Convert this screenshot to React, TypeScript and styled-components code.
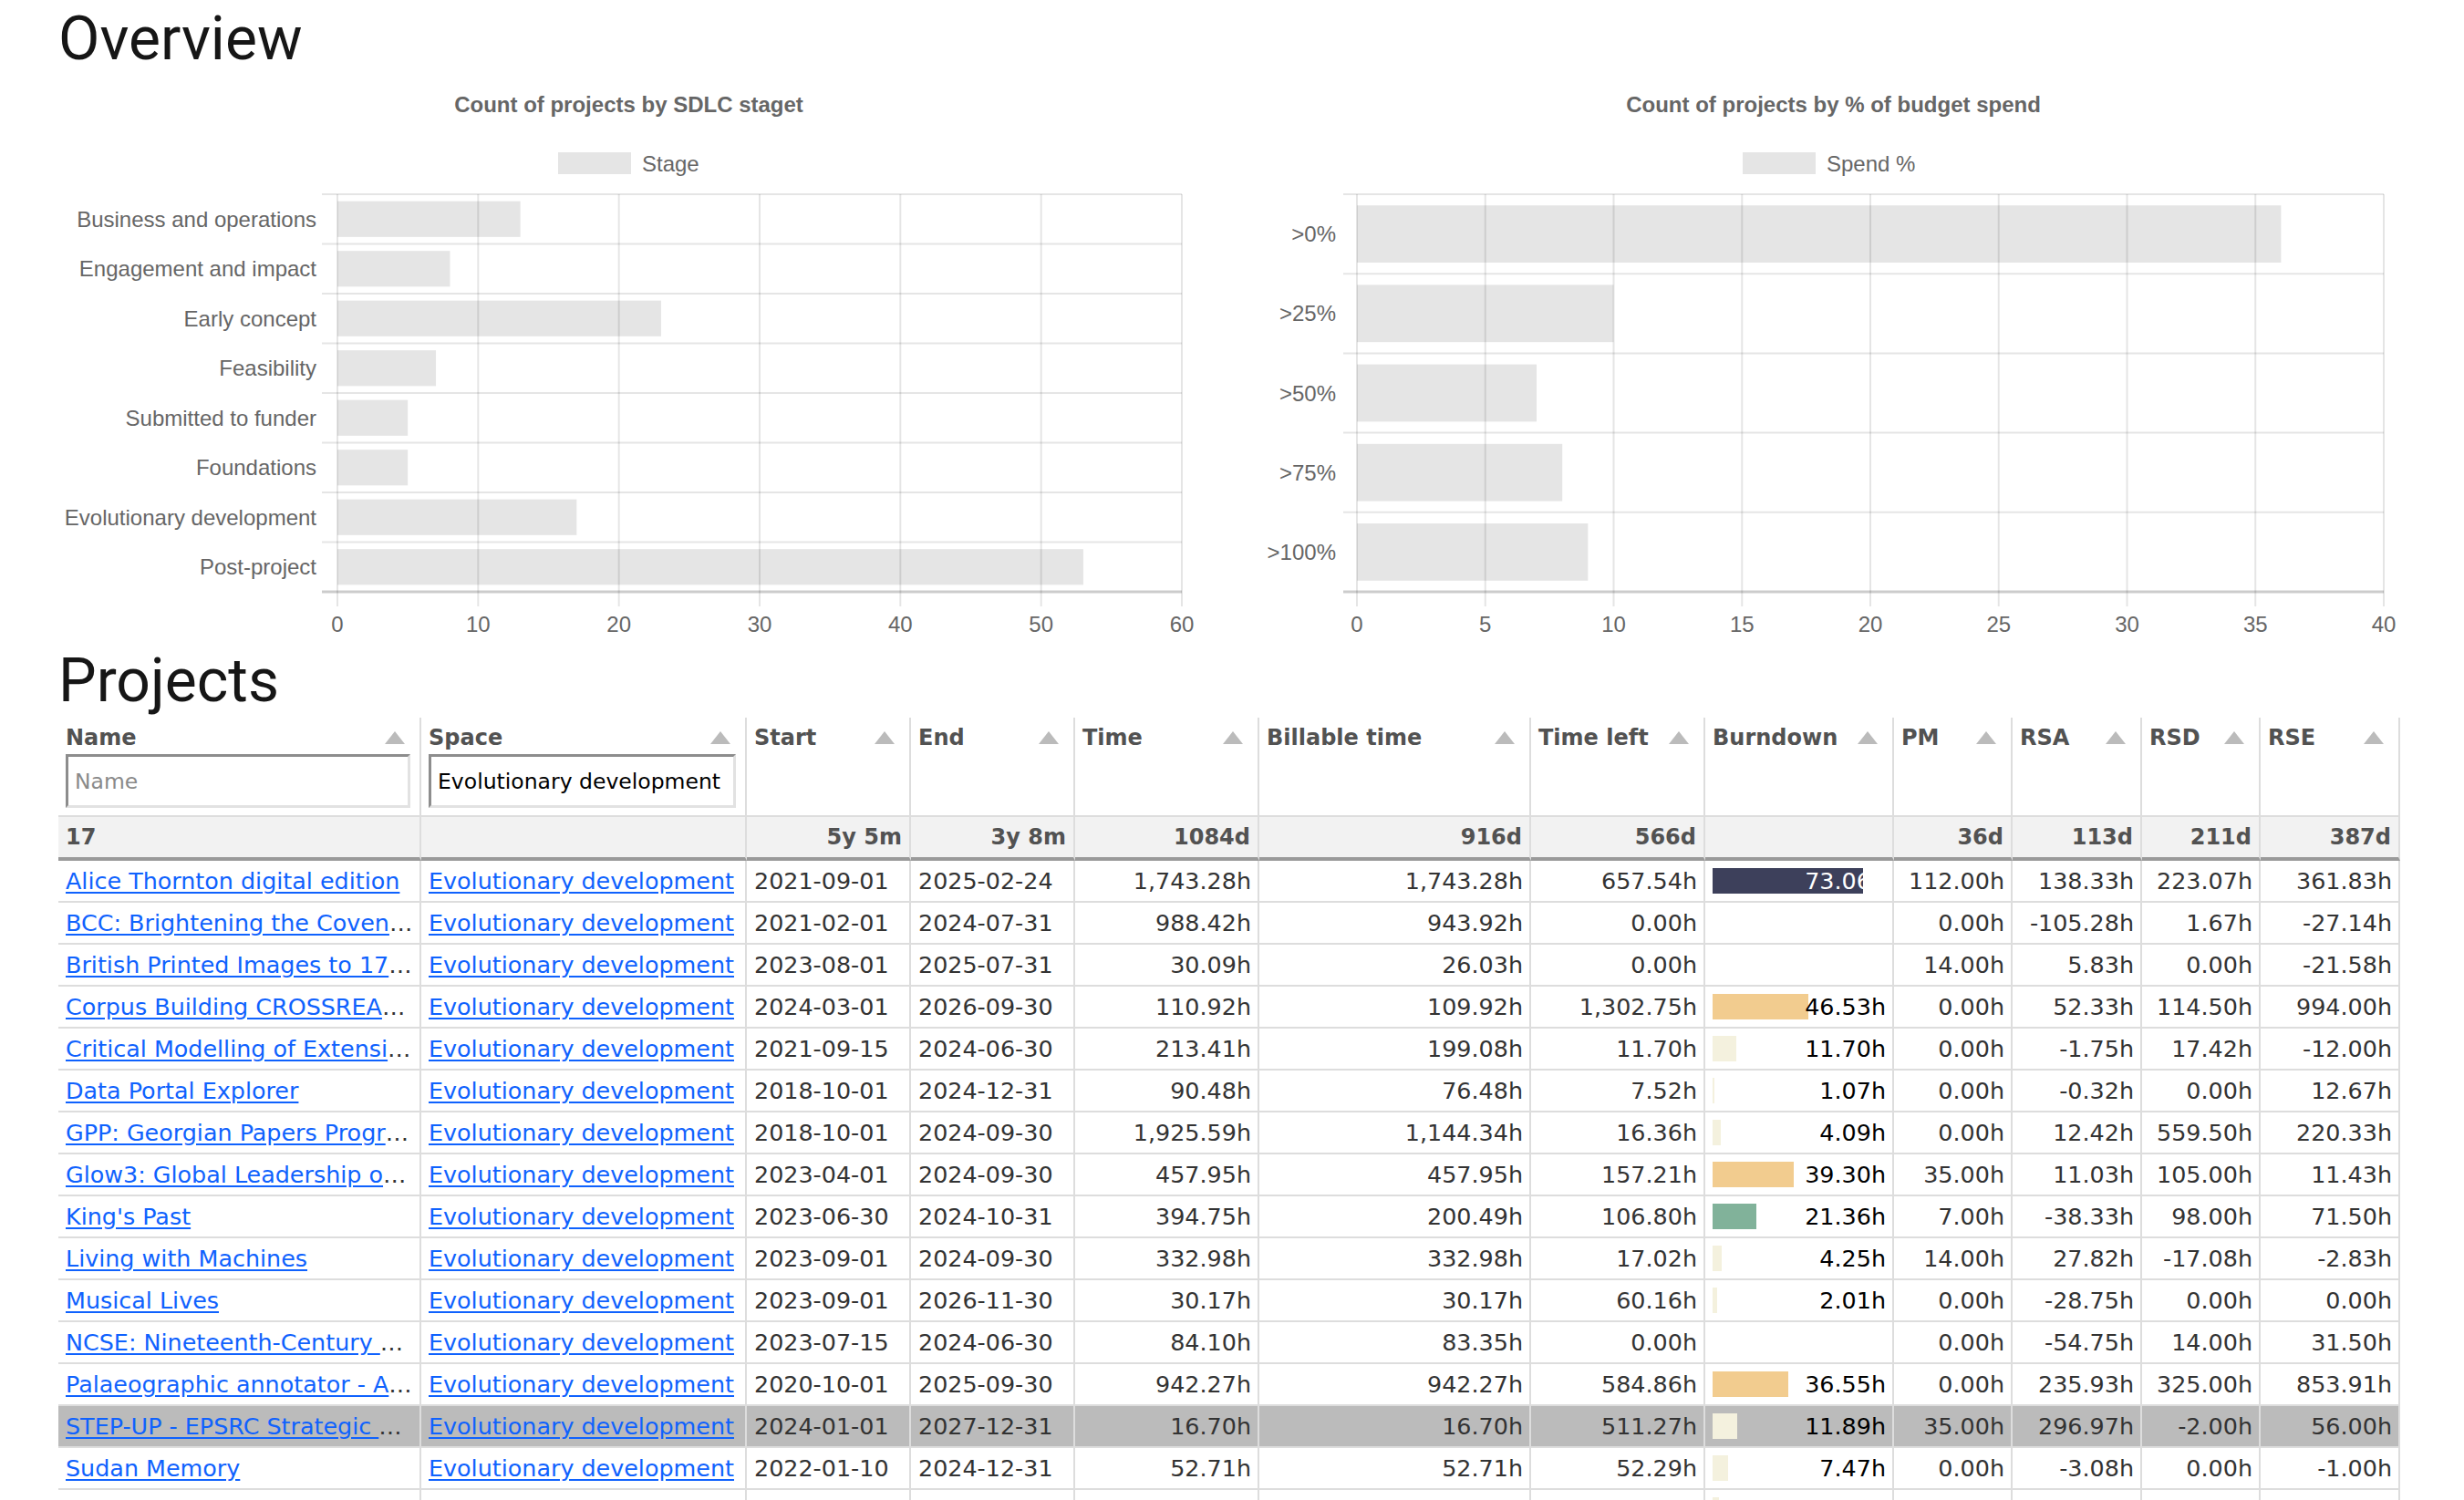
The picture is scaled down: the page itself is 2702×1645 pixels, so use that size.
import React from 'react';
import styled, { createGlobalStyle } from 'styled-components';

const GlobalStyle = createGlobalStyle`
  html { scrollbar-width: none; }
  html::-webkit-scrollbar { display: none; }
  body {
    margin: 0;
    background: #ffffff;
    font-family: "DejaVu Sans", sans-serif;
  }
`;

const Page = styled.main`
  box-sizing: border-box;
  width: 2702px;
  padding: 0 0 0 64px;
`;

const Heading = styled.h1<{ $top: number }>`
  margin: ${(p) => p.$top}px 0 0 0;
  font-family: Roboto, "Noto Sans", sans-serif;
  font-weight: 400;
  font-size: 66px;
  line-height: 66px;
  color: #161616;
`;

const ChartsRow = styled.section`
  display: grid;
  grid-template-columns: 1251px 1251px;
  column-gap: 70px;
  margin-top: 4px;
`;

const ChartSvg = styled.svg`
  display: block;
  width: 1251px;
  height: 630px;
  font-family: "Liberation Sans", Arial, sans-serif;
`;

type ChartProps = {
  title: string;
  legend: string;
  legendBoxX: number;
  categories: string[];
  values: number[];
  max: number;
  step: number;
  plotLeft: number;
  plotRight: number;
  labelRight: number;
  tickStart: number;
};

const PLOT_TOP = 133;
const PLOT_BOTTOM = 569;

function BarChart(props: ChartProps) {
  const { title, legend, legendBoxX, categories, values, max, step, plotLeft, plotRight, labelRight, tickStart } = props;
  const band = (PLOT_BOTTOM - PLOT_TOP) / categories.length;
  const barH = band * 0.72;
  const scale = (v: number) => plotLeft + (v / max) * (plotRight - plotLeft);
  const ticks: number[] = [];
  for (let v = 0; v <= max; v += step) ticks.push(v);
  return (
    <ChartSvg viewBox="0 0 1251 630">
      <text x={625.5} y={34} textAnchor="middle" dominantBaseline="central" fontSize={24} fontWeight={700} fill="#666">
        {title}
      </text>
      <rect x={legendBoxX} y={87} width={80} height={24} fill="rgba(0,0,0,0.1)" />
      <text x={legendBoxX + 92} y={99} dominantBaseline="central" fontSize={24} fill="#666">
        {legend}
      </text>
      {ticks.map((v) => (
        <line key={`v${v}`} x1={scale(v)} x2={scale(v)} y1={PLOT_TOP} y2={PLOT_BOTTOM + 16} stroke="rgba(0,0,0,0.1)" strokeWidth={2} />
      ))}
      {categories.map((_, i) => (
        <line key={`h${i}`} x1={tickStart} x2={plotRight} y1={PLOT_TOP + i * band} y2={PLOT_TOP + i * band} stroke="rgba(0,0,0,0.1)" strokeWidth={2} />
      ))}
      <line x1={tickStart} x2={plotRight} y1={PLOT_BOTTOM} y2={PLOT_BOTTOM} stroke="rgba(0,0,0,0.2)" strokeWidth={3} />
      {values.map((v, i) => (
        <rect
          key={`b${i}`}
          x={plotLeft}
          y={PLOT_TOP + (i + 0.5) * band - barH / 2}
          width={scale(v) - plotLeft}
          height={barH}
          fill="rgba(0,0,0,0.1)"
        />
      ))}
      {categories.map((c, i) => (
        <text key={`l${i}`} x={labelRight} y={PLOT_TOP + (i + 0.5) * band} textAnchor="end" dominantBaseline="central" fontSize={24} fill="#666">
          {c}
        </text>
      ))}
      {ticks.map((v) => (
        <text key={`t${v}`} x={scale(v)} y={604} textAnchor="middle" dominantBaseline="central" fontSize={24} fill="#666">
          {v}
        </text>
      ))}
    </ChartSvg>
  );
}

/* ---------- table ---------- */

const Table = styled.table`
  table-layout: fixed;
  width: 2568px;
  margin-top: 7px;
  border-collapse: separate;
  border-spacing: 0;
  font-family: "DejaVu Sans", sans-serif;
`;

const Col = styled.col<{ $w: number }>`
  width: ${(p) => p.$w}px;
`;

const Th = styled.th`
  vertical-align: top;
  text-align: left;
  padding: 4px 0 8px 0;
  border-right: 2px solid #dddddd;
  border-bottom: 2px solid #dddddd;
`;

const HeadLabel = styled.div`
  display: flex;
  align-items: center;
  justify-content: space-between;
  height: 36px;
  padding: 0 16px 0 8px;
  font-size: 24px;
  font-weight: 700;
  color: #525252;
  white-space: nowrap;
`;

const SortIcon = styled.svg`
  flex: none;
  width: 22px;
  height: 14px;
  fill: #bbbbbb;
`;

const FilterInput = styled.input`
  display: block;
  box-sizing: border-box;
  width: calc(100% - 18px);
  height: 59px;
  margin: 0 0 0 8px;
  padding: 0 7px;
  border-style: solid;
  border-width: 3px;
  border-color: #8d8d8d #e2e2e2 #e2e2e2 #8d8d8d;
  font-family: "DejaVu Sans", sans-serif;
  font-size: 23.5px;
  color: #000;
  background: #fff;
  outline: none;
  &::placeholder {
    color: #8a8a8a;
  }
`;

const SumCell = styled.td<{ $align?: 'left' | 'right' }>`
  height: 44px;
  padding: 0 8px;
  background: #f2f2f2;
  border-right: 2px solid #dddddd;
  border-bottom: 4px solid #9a9a9a;
  font-size: 24px;
  font-weight: 700;
  line-height: 44px;
  color: #525252;
  text-align: ${(p) => p.$align ?? 'right'};
  white-space: nowrap;
`;

const Row = styled.tr<{ $selected?: boolean }>`
  background: ${(p) => (p.$selected ? '#bbbbbb' : '#ffffff')};
`;

const Cell = styled.td<{ $align?: 'left' | 'right' }>`
  height: 44px;
  padding: 0 7px 0 8px;
  border-right: 2px solid #dddddd;
  border-bottom: 2px solid #dddddd;
  font-size: 25.4px;
  line-height: 44px;
  color: #333333;
  text-align: ${(p) => p.$align ?? 'right'};
  white-space: nowrap;
  overflow: hidden;
  text-overflow: ellipsis;
`;

const Link = styled.a`
  color: #0f62fe;
  text-decoration: underline;
  text-underline-offset: 3px;
`;

const BurnBox = styled.div`
  position: relative;
  height: 44px;
`;

const BurnBar = styled.div<{ $tone: Tone }>`
  position: absolute;
  left: 0;
  top: 8px;
  height: 28px;
  background: ${(p) => toneColors[p.$tone]};
`;

const BurnValue = styled.span<{ $light?: boolean }>`
  position: relative;
  color: ${(p) => (p.$light ? '#ffffff' : '#000000')};
`;

type Tone = 'navy' | 'tan' | 'green' | 'cream';
const toneColors: Record<Tone, string> = {
  navy: '#3d405b',
  tan: '#f2cc8f',
  green: '#81b29a',
  cream: '#f4f1de',
};

type Project = {
  name: string;
  start: string;
  end: string;
  time: string;
  billable: string;
  left: string;
  burn?: { value: number; tone: Tone };
  pm: string;
  rsa: string;
  rsd: string;
  rse: string;
  selected?: boolean;
};

const projects: Project[] = [
  { name: 'Alice Thornton digital edition', start: '2021-09-01', end: '2025-02-24', time: '1,743.28h', billable: '1,743.28h', left: '657.54h', burn: { value: 73.06, tone: 'navy' }, pm: '112.00h', rsa: '138.33h', rsd: '223.07h', rse: '361.83h' },
  { name: 'BCC: Brightening the Covenant Chain', start: '2021-02-01', end: '2024-07-31', time: '988.42h', billable: '943.92h', left: '0.00h', pm: '0.00h', rsa: '-105.28h', rsd: '1.67h', rse: '-27.14h' },
  { name: 'British Printed Images to 1700', start: '2023-08-01', end: '2025-07-31', time: '30.09h', billable: '26.03h', left: '0.00h', pm: '14.00h', rsa: '5.83h', rsd: '0.00h', rse: '-21.58h' },
  { name: 'Corpus Building CROSSREADS', start: '2024-03-01', end: '2026-09-30', time: '110.92h', billable: '109.92h', left: '1,302.75h', burn: { value: 46.53, tone: 'tan' }, pm: '0.00h', rsa: '52.33h', rsd: '114.50h', rse: '994.00h' },
  { name: 'Critical Modelling of Extensible Editions', start: '2021-09-15', end: '2024-06-30', time: '213.41h', billable: '199.08h', left: '11.70h', burn: { value: 11.7, tone: 'cream' }, pm: '0.00h', rsa: '-1.75h', rsd: '17.42h', rse: '-12.00h' },
  { name: 'Data Portal Explorer', start: '2018-10-01', end: '2024-12-31', time: '90.48h', billable: '76.48h', left: '7.52h', burn: { value: 1.07, tone: 'cream' }, pm: '0.00h', rsa: '-0.32h', rsd: '0.00h', rse: '12.67h' },
  { name: 'GPP: Georgian Papers Programme', start: '2018-10-01', end: '2024-09-30', time: '1,925.59h', billable: '1,144.34h', left: '16.36h', burn: { value: 4.09, tone: 'cream' }, pm: '0.00h', rsa: '12.42h', rsd: '559.50h', rse: '220.33h' },
  { name: 'Glow3: Global Leadership of Women', start: '2023-04-01', end: '2024-09-30', time: '457.95h', billable: '457.95h', left: '157.21h', burn: { value: 39.3, tone: 'tan' }, pm: '35.00h', rsa: '11.03h', rsd: '105.00h', rse: '11.43h' },
  { name: "King's Past", start: '2023-06-30', end: '2024-10-31', time: '394.75h', billable: '200.49h', left: '106.80h', burn: { value: 21.36, tone: 'green' }, pm: '7.00h', rsa: '-38.33h', rsd: '98.00h', rse: '71.50h' },
  { name: 'Living with Machines', start: '2023-09-01', end: '2024-09-30', time: '332.98h', billable: '332.98h', left: '17.02h', burn: { value: 4.25, tone: 'cream' }, pm: '14.00h', rsa: '27.82h', rsd: '-17.08h', rse: '-2.83h' },
  { name: 'Musical Lives', start: '2023-09-01', end: '2026-11-30', time: '30.17h', billable: '30.17h', left: '60.16h', burn: { value: 2.01, tone: 'cream' }, pm: '0.00h', rsa: '-28.75h', rsd: '0.00h', rse: '0.00h' },
  { name: 'NCSE: Nineteenth-Century Serials Edition', start: '2023-07-15', end: '2024-06-30', time: '84.10h', billable: '83.35h', left: '0.00h', pm: '0.00h', rsa: '-54.75h', rsd: '14.00h', rse: '31.50h' },
  { name: 'Palaeographic annotator - Archetype', start: '2020-10-01', end: '2025-09-30', time: '942.27h', billable: '942.27h', left: '584.86h', burn: { value: 36.55, tone: 'tan' }, pm: '0.00h', rsa: '235.93h', rsd: '325.00h', rse: '853.91h' },
  { name: 'STEP-UP - EPSRC Strategic Equipment', start: '2024-01-01', end: '2027-12-31', time: '16.70h', billable: '16.70h', left: '511.27h', burn: { value: 11.89, tone: 'cream' }, pm: '35.00h', rsa: '296.97h', rsd: '-2.00h', rse: '56.00h', selected: true },
  { name: 'Sudan Memory', start: '2022-01-10', end: '2024-12-31', time: '52.71h', billable: '52.71h', left: '52.29h', burn: { value: 7.47, tone: 'cream' }, pm: '0.00h', rsa: '-3.08h', rsd: '0.00h', rse: '-1.00h' },
  { name: 'Tudor Chamber Books', start: '2022-05-01', end: '2025-04-30', time: '64.20h', billable: '60.10h', left: '12.40h', burn: { value: 3.1, tone: 'cream' }, pm: '0.00h', rsa: '-2.50h', rsd: '0.00h', rse: '4.00h' },
  { name: 'Visualising Voices', start: '2023-02-01', end: '2025-01-31', time: '120.50h', billable: '118.00h', left: '30.75h', burn: { value: 8.2, tone: 'cream' }, pm: '7.00h', rsa: '10.25h', rsd: '0.00h', rse: '-3.50h' },
];

const columns: { label: string; width: number }[] = [
  { label: 'Name', width: 398 },
  { label: 'Space', width: 357 },
  { label: 'Start', width: 180 },
  { label: 'End', width: 180 },
  { label: 'Time', width: 202 },
  { label: 'Billable time', width: 298 },
  { label: 'Time left', width: 191 },
  { label: 'Burndown', width: 207 },
  { label: 'PM', width: 130 },
  { label: 'RSA', width: 142 },
  { label: 'RSD', width: 130 },
  { label: 'RSE', width: 153 },
];

const totals = ['17', '', '5y 5m', '3y 8m', '1084d', '916d', '566d', '', '36d', '113d', '211d', '387d'];

function Sort() {
  return (
    <SortIcon viewBox="0 0 22 14" aria-hidden="true">
      <polygon points="0,14 11,0 22,14" />
    </SortIcon>
  );
}

function Burndown({ burn }: { burn?: Project['burn'] }) {
  if (!burn) return <BurnBox />;
  return (
    <BurnBox>
      <BurnBar $tone={burn.tone} style={{ width: `${burn.value * 2.26}px` }} />
      <BurnValue $light={burn.tone === 'navy'}>{burn.value.toFixed(2)}h</BurnValue>
    </BurnBox>
  );
}

function ProjectsTable() {
  return (
    <Table>
      <colgroup>
        {columns.map((c) => (
          <Col key={c.label} $w={c.width} />
        ))}
      </colgroup>
      <thead>
        <tr>
          {columns.map((c, i) => (
            <Th key={c.label}>
              <HeadLabel>
                <span>{c.label}</span>
                <Sort />
              </HeadLabel>
              {i === 0 && <FilterInput placeholder="Name" readOnly />}
              {i === 1 && <FilterInput value="Evolutionary development" readOnly />}
            </Th>
          ))}
        </tr>
        <tr>
          {totals.map((t, i) => (
            <SumCell key={i} $align={i === 0 ? 'left' : 'right'}>
              {t}
            </SumCell>
          ))}
        </tr>
      </thead>
      <tbody>
        {projects.map((p) => (
          <Row key={p.name} $selected={p.selected}>
            <Cell $align="left">
              <Link href="#">{p.name}</Link>
            </Cell>
            <Cell $align="left">
              <Link href="#">Evolutionary development</Link>
            </Cell>
            <Cell $align="left">{p.start}</Cell>
            <Cell $align="left">{p.end}</Cell>
            <Cell>{p.time}</Cell>
            <Cell>{p.billable}</Cell>
            <Cell>{p.left}</Cell>
            <Cell>
              <Burndown burn={p.burn} />
            </Cell>
            <Cell>{p.pm}</Cell>
            <Cell>{p.rsa}</Cell>
            <Cell>{p.rsd}</Cell>
            <Cell>{p.rse}</Cell>
          </Row>
        ))}
      </tbody>
    </Table>
  );
}

export default function App() {
  return (
    <>
      <GlobalStyle />
      <Page>
        <Heading $top={10}>Overview</Heading>
        <ChartsRow>
          <BarChart
            title="Count of projects by SDLC staget"
            legend="Stage"
            legendBoxX={548}
            categories={[
              'Business and operations',
              'Engagement and impact',
              'Early concept',
              'Feasibility',
              'Submitted to funder',
              'Foundations',
              'Evolutionary development',
              'Post-project',
            ]}
            values={[13, 8, 23, 7, 5, 5, 17, 53]}
            max={60}
            step={10}
            plotLeft={306}
            plotRight={1232}
            labelRight={283}
            tickStart={289}
          />
          <BarChart
            title="Count of projects by % of budget spend"
            legend="Spend %"
            legendBoxX={526}
            categories={['>0%', '>25%', '>50%', '>75%', '>100%']}
            values={[36, 10, 7, 8, 9]}
            max={40}
            step={5}
            plotLeft={103}
            plotRight={1229}
            labelRight={80}
            tickStart={88}
          />
        </ChartsRow>
        <Heading $top={4}>Projects</Heading>
        <ProjectsTable />
      </Page>
    </>
  );
}
